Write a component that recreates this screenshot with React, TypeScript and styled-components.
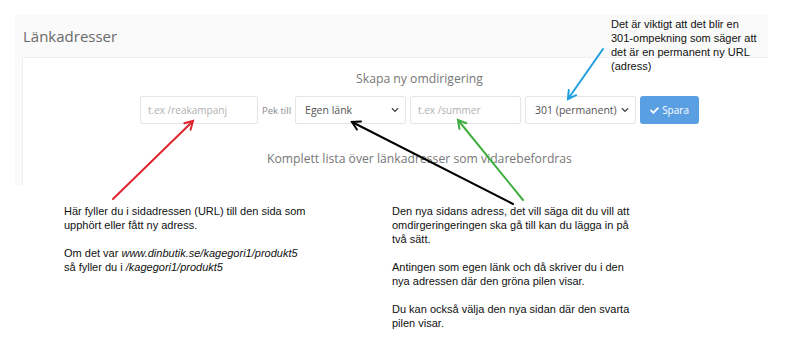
import styled, { createGlobalStyle } from 'styled-components';
import { FaCheck, FaChevronDown } from 'react-icons/fa';

const GlobalStyle = createGlobalStyle`
  html, body {
    margin: 0;
    padding: 0;
    background: #fff;
  }
  body {
    font-family: 'Open Sans', 'Liberation Sans', sans-serif;
  }
`;

const Page = styled.div`
  position: relative;
  width: 798px;
  height: 360px;
  overflow: hidden;
  padding-top: 15px;
  box-sizing: border-box;
`;

const Panel = styled.div`
  margin-left: 15px;
  width: 753px;
  background: #fafafa;
`;

const PanelHeader = styled.div`
  height: 42px;
  padding-left: 8px;
  display: flex;
  align-items: center;
`;

const PanelTitle = styled.h2`
  margin: 0;
  font-size: 15px;
  font-weight: 400;
  color: #6a6a6a;
`;

const Card = styled.div`
  margin-left: 7px;
  height: 128px;
  padding: 12px 0 0 48px;
  box-sizing: border-box;
  background: #fff;
  border-top: 1px solid #efefef;
  border-left: 1px solid #efefef;
  display: flex;
  flex-direction: column;
  align-items: center;
`;

const Heading = styled.div`
  font-size: 12.2px;
  line-height: 18px;
  color: #777;
`;

const ListHeading = styled.div`
  margin-top: 25px;
  font-size: 12.2px;
  line-height: 20px;
  color: #777;
`;

const FormRow = styled.div`
  margin-top: 8px;
  display: flex;
  align-items: center;
  gap: 4px;
`;

const TextField = styled.input<{ $w: number }>`
  width: ${p => p.$w}px;
  height: 28px;
  box-sizing: border-box;
  border: 1px solid #e6e6e6;
  border-radius: 2px;
  padding: 0 7px;
  font-family: 'Open Sans', sans-serif;
  font-size: 10px;
  color: #555;
  outline: none;
  &::placeholder {
    color: #b0b0b0;
  }
`;

const Label = styled.span`
  font-size: 9.5px;
  color: #8a8a8a;
`;

const SelectBox = styled.div`
  width: 111px;
  height: 28px;
  box-sizing: border-box;
  border: 1px solid #e6e6e6;
  border-radius: 2px;
  padding: 0 6px 0 9px;
  display: flex;
  align-items: center;
  justify-content: space-between;
  font-size: 10.5px;
  color: #555;
  white-space: nowrap;
  svg {
    color: #444;
    flex-shrink: 0;
  }
`;

const SaveButton = styled.button`
  width: 59px;
  height: 28px;
  border: none;
  border-radius: 3px;
  background: #5b9fe3;
  color: #fff;
  font-family: 'Open Sans', sans-serif;
  font-size: 10px;
  display: flex;
  align-items: center;
  justify-content: center;
  gap: 3px;
  padding: 0;
`;

const Note = styled.div<{ $x: number; $y: number }>`
  position: absolute;
  left: ${p => p.$x}px;
  top: ${p => p.$y}px;
  font-family: 'Liberation Sans', Arial, sans-serif;
  font-size: 11px;
  line-height: 14px;
  color: #111;
  white-space: nowrap;
  p {
    margin: 0 0 14px;
  }
  p:last-child {
    margin-bottom: 0;
  }
`;

const Overlay = styled.svg`
  position: absolute;
  left: 0;
  top: 0;
  pointer-events: none;
`;

type ArrowProps = { x1: number; y1: number; x2: number; y2: number; color: string };

// line from (x1,y1) with an open head at (x2,y2)
const Arrow = ({ x1, y1, x2, y2, color }: ArrowProps) => {
  const a = Math.atan2(y2 - y1, x2 - x1);
  const len = 9;
  const spread = Math.PI / 6;
  const p1 = [x2 - len * Math.cos(a - spread), y2 - len * Math.sin(a - spread)];
  const p2 = [x2 - len * Math.cos(a + spread), y2 - len * Math.sin(a + spread)];
  return (
    <g stroke={color} strokeWidth={2} fill="none" strokeLinecap="round">
      <line x1={x1} y1={y1} x2={x2} y2={y2} />
      <polyline points={`${p1[0]},${p1[1]} ${x2},${y2} ${p2[0]},${p2[1]}`} />
    </g>
  );
};

const App = () => {
  return (
    <Page>
      <GlobalStyle />
      <Panel>
        <PanelHeader>
          <PanelTitle>Länkadresser</PanelTitle>
        </PanelHeader>
        <Card>
          <Heading>Skapa ny omdirigering</Heading>
          <FormRow>
            <TextField $w={118} placeholder="t.ex /reakampanj" />
            <Label>Pek till</Label>
            <SelectBox>
              <span>Egen länk</span>
              <FaChevronDown size={8} />
            </SelectBox>
            <TextField $w={111} placeholder="t.ex /summer" />
            <SelectBox>
              <span>301 (permanent)</span>
              <FaChevronDown size={8} />
            </SelectBox>
            <SaveButton>
              <FaCheck size={9} />
              Spara
            </SaveButton>
          </FormRow>
          <ListHeading>Komplett lista över länkadresser som vidarebefordras</ListHeading>
        </Card>
      </Panel>

      <Note $x={611} $y={17}>
        Det är viktigt att det blir en
        <br />
        301-ompekning som säger att
        <br />
        det är en permanent ny URL
        <br />
        (adress)
      </Note>

      <Note $x={64} $y={204}>
        <p>
          Här fyller du i sidadressen (URL) till den sida som
          <br />
          upphört eller fått ny adress.
        </p>
        <p>
          Om det var <i>www.dinbutik.se/kagegori1/produkt5</i>
          <br />
          så fyller du i <i>/kagegori1/produkt5</i>
        </p>
      </Note>

      <Note $x={392} $y={204}>
        <p>
          Den nya sidans adress, det vill säga dit du vill att
          <br />
          omdirgeringeringen ska gå till kan du lägga in på
          <br />
          två sätt.
        </p>
        <p>
          Antingen som egen länk och då skriver du i den
          <br />
          nya adressen där den gröna pilen visar.
        </p>
        <p>
          Du kan också välja den nya sidan där den svarta
          <br />
          pilen visar.
        </p>
      </Note>

      <Overlay width={798} height={360}>
        <Arrow x1={603} y1={49} x2={568} y2={99} color="#1d9fe0" />
        <Arrow x1={113} y1={199} x2={193} y2={121} color="#e0242e" />
        <Arrow x1={513} y1={204} x2={352} y2={122} color="#000" />
        <Arrow x1={523} y1={200} x2={458} y2={120} color="#3fae3f" />
      </Overlay>
    </Page>
  );
};

export default App;
